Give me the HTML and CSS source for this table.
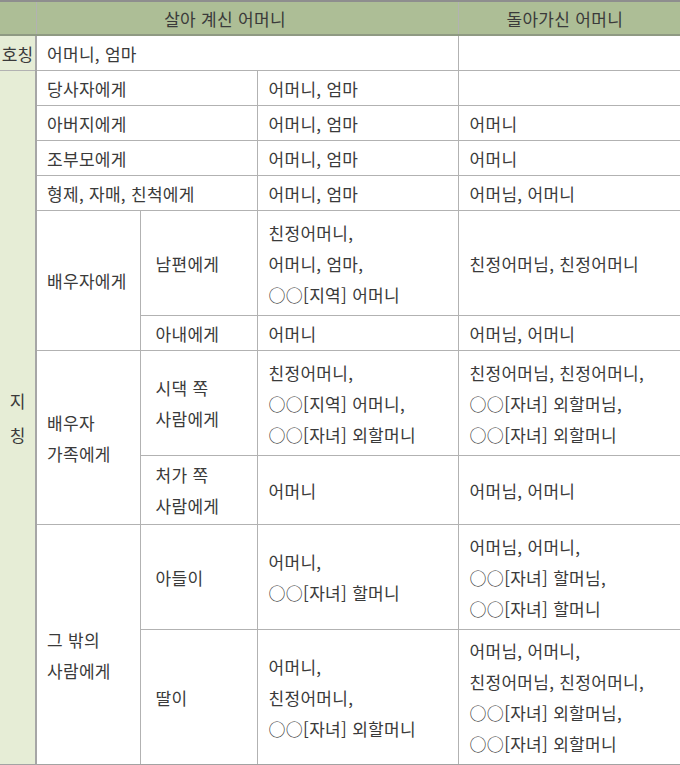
FILE: index.html
```html
<!DOCTYPE html>
<html lang="ko">
<head>
<meta charset="utf-8">
<title>어머니 호칭과 지칭</title>
<link rel="stylesheet" href="styles.css">
</head>
<body>
<table class="terms">
  <colgroup>
    <col class="c0"><col class="c1"><col class="c2"><col class="c3"><col class="c4">
  </colgroup>
  <thead>
    <tr>
      <th class="corner"></th>
      <th class="h-live" colspan="3">살아 계신 어머니</th>
      <th class="h-dead">돌아가신 어머니</th>
    </tr>
  </thead>
  <tbody>
    <tr class="r1">
      <td class="side">호칭</td>
      <td colspan="3" class="first">어머니, 엄마</td>
      <td></td>
    </tr>
    <tr class="r1">
      <td class="side vert" rowspan="10">지<br>칭</td>
      <td colspan="2" class="first">당사자에게</td>
      <td>어머니, 엄마</td>
      <td></td>
    </tr>
    <tr class="r1">
      <td colspan="2" class="first">아버지에게</td>
      <td>어머니, 엄마</td>
      <td>어머니</td>
    </tr>
    <tr class="r1">
      <td colspan="2" class="first">조부모에게</td>
      <td>어머니, 엄마</td>
      <td>어머니</td>
    </tr>
    <tr class="r1">
      <td colspan="2" class="first">형제, 자매, 친척에게</td>
      <td>어머니, 엄마</td>
      <td>어머님, 어머니</td>
    </tr>
    <tr class="r3">
      <td rowspan="2" class="first">배우자에게</td>
      <td class="sub">남편에게</td>
      <td>친정어머니,<br>어머니, 엄마,<br>○○[지역] 어머니</td>
      <td>친정어머님, 친정어머니</td>
    </tr>
    <tr class="r1">
      <td class="sub">아내에게</td>
      <td>어머니</td>
      <td>어머님, 어머니</td>
    </tr>
    <tr class="r3">
      <td rowspan="2" class="first">배우자<br>가족에게</td>
      <td class="sub">시댁 쪽<br>사람에게</td>
      <td>친정어머니,<br>○○[지역] 어머니,<br>○○[자녀] 외할머니</td>
      <td>친정어머님, 친정어머니,<br>○○[자녀] 외할머님,<br>○○[자녀] 외할머니</td>
    </tr>
    <tr class="r2">
      <td class="sub">처가 쪽<br>사람에게</td>
      <td>어머니</td>
      <td>어머님, 어머니</td>
    </tr>
    <tr class="r3">
      <td rowspan="2" class="first other">그 밖의<br>사람에게</td>
      <td class="sub">아들이</td>
      <td>어머니,<br>○○[자녀] 할머니</td>
      <td>어머님, 어머니,<br>○○[자녀] 할머님,<br>○○[자녀] 할머니</td>
    </tr>
    <tr class="r4">
      <td class="sub">딸이</td>
      <td>어머니,<br>친정어머니,<br>○○[자녀] 외할머니</td>
      <td>어머님, 어머니,<br>친정어머님, 친정어머니,<br>○○[자녀] 외할머님,<br>○○[자녀] 외할머니</td>
    </tr>
  </tbody>
</table>
</body>
</html>
```

FILE: styles.css
```css
html, body {
  margin: 0;
  padding: 0;
  background: #ffffff;
}

body {
  font-family: "Noto Sans CJK KR", "Noto Sans", sans-serif;
  font-size: 17px;
  letter-spacing: 0.3px;
  color: #3a3a3a;
}

.terms {
  width: 680px;
  table-layout: fixed;
  border-collapse: collapse;
  border-top: 2px solid #8e8e8e;
  border-bottom: 2px solid #a3a3a3;
}

.c0 { width: 36px; }
.c1 { width: 104px; }
.c2 { width: 117px; }
.c3 { width: 201px; }
.c4 { width: 222px; }

.terms th,
.terms td {
  padding: 0 10px 0 11px;
  line-height: 31px;
  text-align: left;
  vertical-align: middle;
  font-weight: normal;
  border: 1px solid #b2b2b2;
  white-space: nowrap;
}

.terms th {
  background: #adbe96;
  height: 32px;
  text-align: center;
  border-bottom: 2px solid #8f9a83;
  border-top: 2px solid #8e8e8e;
}

.terms th.h-live { padding-right: 55px; }
.terms th.h-dead { padding-right: 20px; }

.terms th:first-child,
.terms td:first-child { border-left: none; }
.terms th:last-child,
.terms td:last-child { border-right: none; }

.terms td.side {
  background: #e6edd6;
  padding: 0;
  text-align: center;
  letter-spacing: 0;
  border-right: 2px solid #a6a6a6;
}

.terms td.vert {
  line-height: 34px;
}

.terms td.first { padding-left: 10px; }
.terms td.sub { padding-left: 15px; }
.terms td.other { padding-top: 20px; }

.r1 td { height: 34px; }
.r2 td { height: 68px; }
.r3 td { height: 104px; }
.r4 td { height: 134px; }
```
